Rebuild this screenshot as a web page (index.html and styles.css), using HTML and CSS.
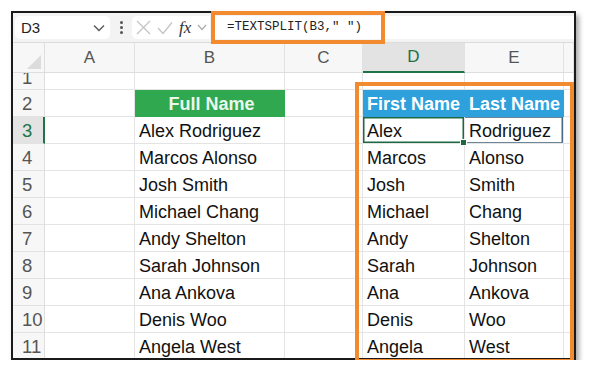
FILE: index.html
```html
<!DOCTYPE html>
<html lang="en">
<head>
<meta charset="UTF-8" />
<title>TEXTSPLIT</title>
<link rel="stylesheet" href="styles.css">
</head>
<body>

<div class="window">
  <div class="toolbar">
    <div class="namebox">
      <span>D3</span>
      <svg class="chev" width="12" height="8" viewBox="0 0 12 8"><path d="M1 1.5 L6 6.5 L11 1.5" fill="none" stroke="#555" stroke-width="1.3"/></svg>
    </div>
    <div class="dots"><i></i><i></i><i></i></div>
    <div class="fxbox">
      <svg width="15" height="15" viewBox="0 0 15 15"><path d="M1 1 L14 14 M14 1 L1 14" stroke="#c4c4c4" stroke-width="1.3"/></svg>
      <svg width="16" height="14" viewBox="0 0 16 14"><path d="M1 7 L6 12.5 L15 1.5" fill="none" stroke="#c4c4c4" stroke-width="1.3"/></svg>
      <span class="fx">fx</span>
      <svg width="10" height="7" viewBox="0 0 10 7"><path d="M1 1 L5 5.5 L9 1" fill="none" stroke="#aaa" stroke-width="1.2"/></svg>
    </div>
    <div class="formula">=TEXTSPLIT(B3," ")</div>
  </div>

  <div class="sheet">
    <div class="corner"><span class="tri"></span></div>
    <div class="colhead">A</div>
    <div class="colhead">B</div>
    <div class="colhead">C</div>
    <div class="colhead active">D</div>
    <div class="colhead">E</div>
    <div class="colhead"></div>

    <div class="rowhead cut"><span>1</span></div>
    <div class="cell"></div><div class="cell"></div><div class="cell"></div><div class="cell"></div><div class="cell"></div><div class="cell"></div>

    <div class="rowhead">2</div>
    <div class="cell"></div>
    <div class="cell head green">Full Name</div>
    <div class="cell"></div>
    <div class="cell head blue">First Name</div>
    <div class="cell head blue">Last Name</div>
    <div class="cell"></div>

    <div class="rowhead active">3</div>
    <div class="cell"></div>
    <div class="cell">Alex Rodriguez</div>
    <div class="cell"></div>
    <div class="cell selected">Alex<span class="handle"></span></div>
    <div class="cell spill">Rodriguez</div>
    <div class="cell"></div>

    <div class="rowhead">4</div>
    <div class="cell"></div><div class="cell">Marcos Alonso</div><div class="cell"></div>
    <div class="cell">Marcos</div><div class="cell">Alonso</div><div class="cell"></div>

    <div class="rowhead">5</div>
    <div class="cell"></div><div class="cell">Josh Smith</div><div class="cell"></div>
    <div class="cell">Josh</div><div class="cell">Smith</div><div class="cell"></div>

    <div class="rowhead">6</div>
    <div class="cell"></div><div class="cell">Michael Chang</div><div class="cell"></div>
    <div class="cell">Michael</div><div class="cell">Chang</div><div class="cell"></div>

    <div class="rowhead">7</div>
    <div class="cell"></div><div class="cell">Andy Shelton</div><div class="cell"></div>
    <div class="cell">Andy</div><div class="cell">Shelton</div><div class="cell"></div>

    <div class="rowhead">8</div>
    <div class="cell"></div><div class="cell">Sarah Johnson</div><div class="cell"></div>
    <div class="cell">Sarah</div><div class="cell">Johnson</div><div class="cell"></div>

    <div class="rowhead">9</div>
    <div class="cell"></div><div class="cell">Ana Ankova</div><div class="cell"></div>
    <div class="cell">Ana</div><div class="cell">Ankova</div><div class="cell"></div>

    <div class="rowhead">10</div>
    <div class="cell"></div><div class="cell">Denis Woo</div><div class="cell"></div>
    <div class="cell">Denis</div><div class="cell">Woo</div><div class="cell"></div>

    <div class="rowhead">11</div>
    <div class="cell"></div><div class="cell">Angela West</div><div class="cell"></div>
    <div class="cell">Angela</div><div class="cell">West</div><div class="cell"></div>
  </div>

  <div class="mark mark-formula"></div>
  <div class="mark mark-result"></div>
</div>

</body>
</html>
```

FILE: styles.css
```css
body {
  margin: 0;
  background: #fff;
  font-family: 'Liberation Sans', Arial, sans-serif;
}
.window {
  position: relative;
  margin: 11px 0 0 11px;
  width: 565px;
  height: 349px;
  box-sizing: border-box;
  border: 2px solid #1a1a1a;
  box-shadow: 3px 4px 5px rgba(0,0,0,0.35);
  background: #fff;
}
.toolbar {
  height: 30px;
  background: #f3f3f3;
  border-bottom: 1px solid #dcdcdc;
  box-sizing: border-box;
  display: flex;
  align-items: center;
  padding-left: 2px;
}
.namebox {
  width: 95px;
  height: 23px;
  background: #fff;
  border-radius: 5px;
  box-sizing: border-box;
  display: flex;
  align-items: center;
  justify-content: space-between;
  padding: 0 5px 0 6px;
  font-size: 15px;
  color: #222;
}
.dots {
  width: 22px;
  display: flex;
  flex-direction: column;
  align-items: center;
  gap: 2px;
}
.dots i {
  width: 3px;
  height: 3px;
  background: #555;
  border-radius: 50%;
}
.fxbox {
  width: 78px;
  height: 23px;
  background: #fff;
  border-radius: 5px 0 0 5px;
  display: flex;
  align-items: center;
  gap: 6px;
  padding-left: 4px;
  box-sizing: border-box;
}
.fx {
  font-family: 'Liberation Serif', serif;
  font-style: italic;
  font-size: 17px;
  color: #333;
}
.formula {
  flex: 1;
  height: 23px;
  margin-left: 4px;
  background: #fff;
  font-family: 'Liberation Mono', monospace;
  font-size: 12.5px;
  line-height: 23px;
  padding-left: 13px;
  color: #222;
}
.sheet {
  display: grid;
  grid-template-columns: 32px 90px 150px 78px 102px 99px 1fr;
  grid-template-rows: 30px 17px repeat(10, 27px);
  height: 315px;
  overflow: hidden;
}
.corner {
  background: #f7f7f7;
  border-right: 1px solid #dedede;
  border-bottom: 1px solid #dedede;
  position: relative;
}
.tri {
  position: absolute;
  right: 3px;
  bottom: 3px;
  width: 0;
  height: 0;
  border-left: 14px solid transparent;
  border-bottom: 14px solid #dcdcdc;
}
.colhead {
  background: #f7f7f7;
  border-right: 1px solid #e2e2e2;
  border-bottom: 1px solid #dedede;
  display: flex;
  align-items: center;
  justify-content: center;
  font-size: 17px;
  color: #555;
}
.colhead.active {
  background: #e3e3e3;
  color: #217346;
  border-bottom: 2px solid #217346;
}
.rowhead {
  background: #f7f7f7;
  border-right: 1px solid #dedede;
  border-bottom: 1px solid #e2e2e2;
  font-size: 18.5px;
  color: #555;
  padding-left: 9px;
  line-height: 28px;
  overflow: hidden;
}
.rowhead.cut span {
  display: block;
  margin-top: -9px;
}
.rowhead.active {
  background: #e3e3e3;
  color: #217346;
  border-right: 2px solid #217346;
}
.cell {
  position: relative;
  border-right: 1px solid #e4e4e4;
  border-bottom: 1px solid #e4e4e4;
  font-size: 18px;
  line-height: 28px;
  padding-left: 4px;
  color: #111;
  white-space: nowrap;
}
.cell.head {
  font-weight: bold;
  color: #fff;
}
.cell.green {
  background: #2fa84f;
  color: #e9f7ee;
  text-align: center;
  border-color: #2fa84f;
}
.cell.blue {
  background: #2ea0dc;
  border-color: #2ea0dc;
}
.cell.selected {
  box-shadow: inset 0 0 0 1.5px #1d6a42;
}
.handle {
  position: absolute;
  right: -3px;
  bottom: -3px;
  width: 5px;
  height: 5px;
  background: #1d6a42;
  border: 1px solid #fff;
  z-index: 2;
}
.cell.spill {
  box-shadow: inset 0 -1px 0 #6b8599, inset -1.5px 0 0 #4d6b80, inset 0 1px 0 #6b8599;
}
.mark {
  position: absolute;
  border: 4.5px solid #f28b30;
  box-sizing: border-box;
  z-index: 3;
}
.mark-formula {
  left: 198px;
  top: -2px;
  width: 174px;
  height: 33px;
}
.mark-result {
  left: 342px;
  top: 69px;
  width: 219px;
  height: 281px;
}
```
